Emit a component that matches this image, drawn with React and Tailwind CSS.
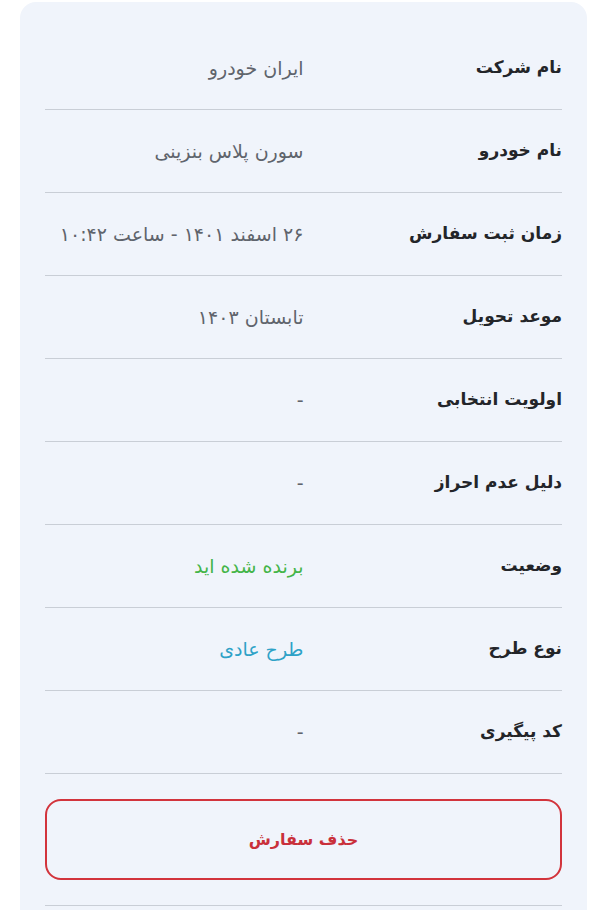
import React from 'react';

const rows = [
    { label: 'نام شرکت', value: 'ایران خودرو' },
    { label: 'نام خودرو', value: 'سورن پلاس بنزینی' },
    { label: 'زمان ثبت سفارش', value: '۲۶ اسفند ۱۴۰۱ - ساعت ۱۰:۴۲' },
    { label: 'موعد تحویل', value: 'تابستان ۱۴۰۳' },
    { label: 'اولویت انتخابی', value: '-' },
    { label: 'دلیل عدم احراز', value: '-' },
    { label: 'وضعیت', value: 'برنده شده اید', tone: 'green' },
    { label: 'نوع طرح', value: 'طرح عادی', tone: 'blue' },
    { label: 'کد پیگیری', value: '-' },
];

const toneClass = {
    green: 'text-[#44b548]',
    blue: 'text-[#2ea2c7]',
};

const App = () => {
    return (
        <div dir="rtl" className="min-h-screen bg-white pt-[2px] overflow-hidden" style={{ fontFamily: '"DejaVu Sans", sans-serif' }}>
            <div className="ml-5 mr-[19px] rounded-2xl bg-[#f0f4fb] px-[25px] pt-[25px] pb-10">
                {rows.map((row) => (
                    <div key={row.label} className="grid grid-cols-2 items-center h-[83px] border-b border-[#c9ced6]">
                        <div className="text-[17px] font-bold text-[#232529]">{row.label}</div>
                        <div className={`text-[19px] ${toneClass[row.tone] || 'text-[#5f646c]'}`}>{row.value}</div>
                    </div>
                ))}

                {/* Delete order */}
                <div className="py-[25px] border-b border-[#c9ced6]">
                    <button className="w-full h-[81px] rounded-[16px] border-2 border-[#d2343c] text-[#c9303a] text-[16px] font-bold">
                        حذف سفارش
                    </button>
                </div>
            </div>
        </div>
    );
};

export default App;
